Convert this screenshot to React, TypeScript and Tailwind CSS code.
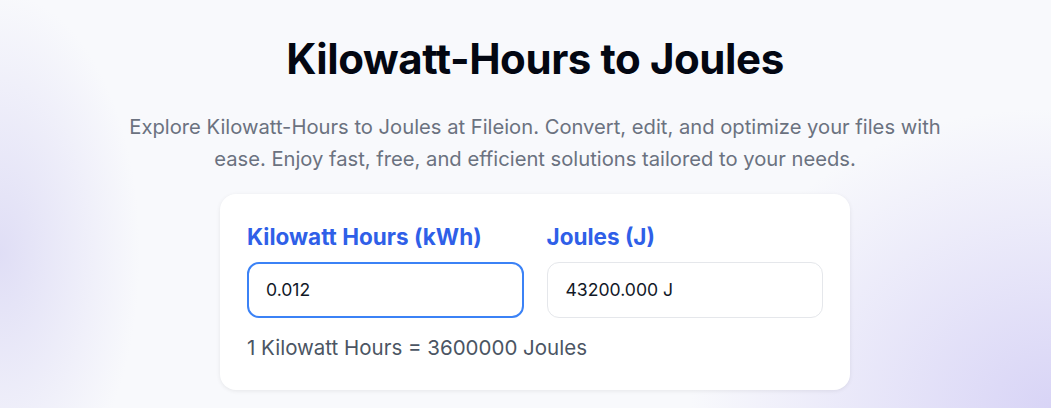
import React from "react";

export default function App() {
  return (
    <div
      className="relative w-full h-[408px] overflow-hidden bg-[#f8f9fc]"
      style={{ fontFamily: "Inter, 'Noto Sans', sans-serif" }}
    >
      <div className="pointer-events-none absolute inset-0 bg-[radial-gradient(ellipse_140px_260px_at_0%_62%,rgba(221,219,245,0.9),rgba(248,249,252,0))]" />
      <div className="pointer-events-none absolute inset-0 bg-[radial-gradient(ellipse_360px_300px_at_100%_100%,rgba(216,212,246,1),rgba(248,249,252,0))]" />
      <div className="relative flex flex-col items-center pt-[34px] pl-[19px]">
        <h1 className="text-[42px] leading-[50px] font-bold text-[#030712] tracking-[-0.01em]">
          Kilowatt-Hours to Joules
        </h1>
        <p className="mt-[27px] w-[836px] text-center text-[20.2px] leading-[32px] text-[#6b7280]">
          Explore Kilowatt-Hours to Joules at Fileion. Convert, edit, and optimize your files with ease. Enjoy fast, free, and efficient solutions tailored to your needs.
        </p>
        <div className="mt-[19px] w-[630px] rounded-2xl bg-white px-[27px] pt-[28px] pb-[28px] shadow-[0_1px_4px_rgba(0,0,0,0.08)]">
          <div className="grid grid-cols-2 gap-[23px]">
            <div className="flex flex-col">
              <label className="text-[22.5px] leading-[30px] font-bold text-[#2f5fe8]">
                Kilowatt Hours (kWh)
              </label>
              <div className="mt-[10px] h-[56px] rounded-xl border-2 border-[#3b82f6] flex items-center px-[17px] text-[17.6px] text-[#111827]">
                0.012
              </div>
            </div>
            <div className="flex flex-col">
              <label className="text-[22.5px] leading-[30px] font-bold text-[#2f5fe8]">
                Joules (J)
              </label>
              <div className="mt-[10px] h-[56px] rounded-xl border border-[#e5e7eb] flex items-center px-[18px] text-[17.6px] text-[#111827]">
                43200.000 J
              </div>
            </div>
          </div>
          <p className="mt-[16px] text-[20.5px] leading-[28px] text-[#4b5563]">
            1 Kilowatt Hours = 3600000 Joules
          </p>
        </div>
      </div>
    </div>
  );
}
